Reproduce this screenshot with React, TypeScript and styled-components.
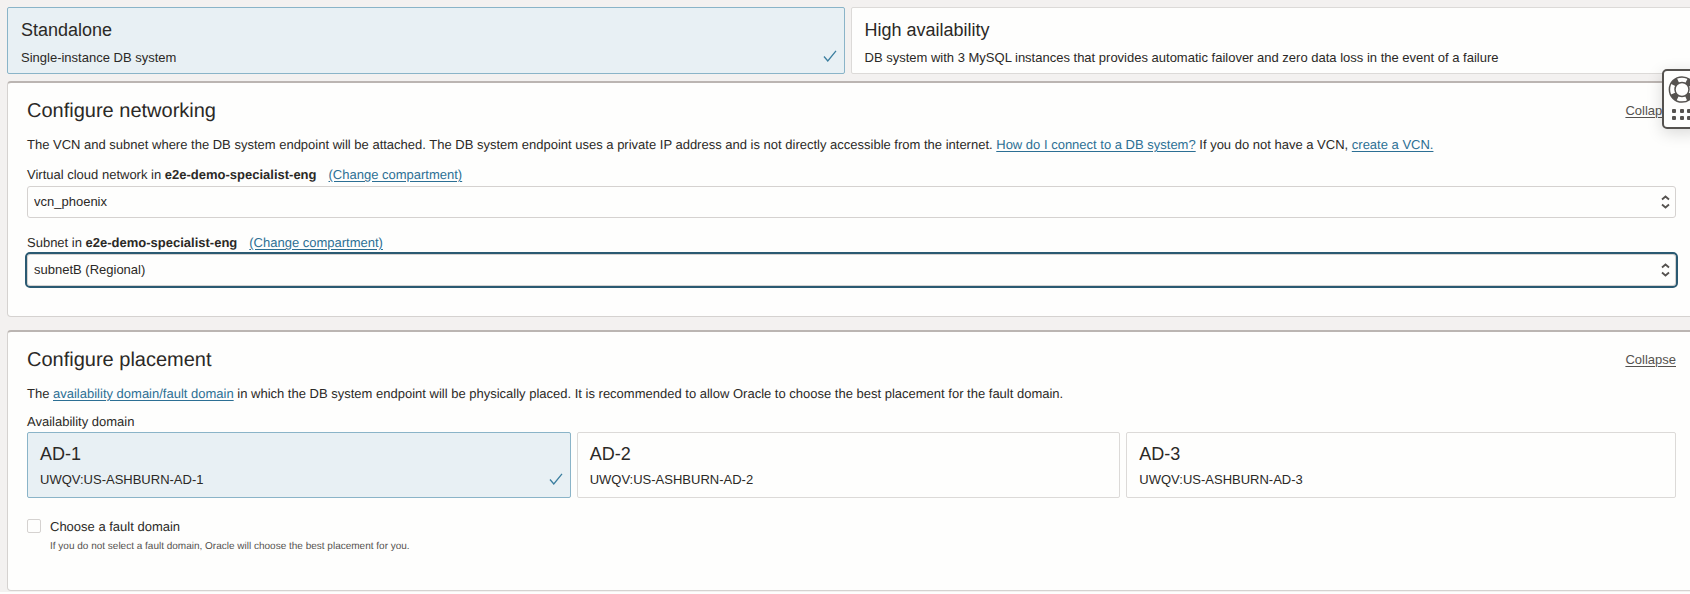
import React, { useState } from "react";
import styled, { createGlobalStyle } from "styled-components";

const Global = createGlobalStyle`
  * { box-sizing: border-box; }
  body {
    margin: 0;
    background: #fefefd;
    color: #2b2926;
    font: 13px/16px "Liberation Sans", Arial, sans-serif;
    text-rendering: geometricPrecision;
  }
  a { color: #2c6f94; text-underline-offset: 2px; }
`;

const Page = styled.main`
  position: relative;
  overflow: hidden;
  padding: 7px 0 1px 7px;
  background: #f3f1f0;
`;

const Choices = styled.div<{ $columns: number; $bleed?: boolean }>`
  display: grid;
  grid-template-columns: repeat(${(p) => p.$columns}, 1fr);
  margin-right: ${(p) => (p.$bleed ? "-4px" : "0")};
`;

const Card = styled.button<{ $selected: boolean; $roomy?: boolean }>`
  display: flex;
  justify-content: space-between;
  align-items: flex-end;
  height: ${(p) => (p.$roomy ? "67px" : "66px")};
  margin-right: 6px;
  padding: ${(p) => (p.$roomy ? "0 7px 7px 13px" : "0 7px 9px 12px")};
  text-align: left;
  font: inherit;
  color: inherit;
  border: 1px solid ${(p) => (p.$selected ? "#8ab4c8" : "#dcdad8")};
  border-radius: 2px;
  background: ${(p) => (p.$selected ? "#e8f0f4" : "#fefefd")};
  &:last-child { margin-right: 0; }
  svg { margin-bottom: ${(p) => (p.$roomy ? "4px" : "3px")}; }
`;

const CardText = styled.span<{ $roomy?: boolean }>`
  display: flex;
  flex-direction: column;
  gap: ${(p) => (p.$roomy ? "9px" : "7px")};
`;

const CardTitle = styled.span`
  font-size: 18px;
  line-height: 22px;
`;

const Panel = styled.section<{ $bottom: number }>`
  margin: 7px -4px 0 0;
  padding: 16px 17px ${(p) => p.$bottom}px 19px;
  background: #fefefd;
  border: 1px solid #d5d2d0;
  border-top: 2px solid #bbb5b2;
  border-radius: 4px;
  & + & { margin-top: 13px; }
`;

const PanelHeader = styled.header`
  display: flex;
  justify-content: space-between;
  align-items: center;
  height: 24px;
`;

const PanelTitle = styled.h2`
  margin: 0;
  font-size: 20px;
  line-height: 24px;
  font-weight: 400;
`;

const Collapse = styled.button`
  padding: 0;
  border: 0;
  background: none;
  font: inherit;
  color: #55524f;
  text-decoration: underline;
  text-underline-offset: 2px;
`;

const Intro = styled.p<{ $tight?: boolean }>`
  margin: 14px 0 ${(p) => (p.$tight ? "12px" : "14px")};
`;

const Field = styled.div`
  margin-bottom: 17px;
`;

const LabelRow = styled.div`
  display: flex;
  gap: 12px;
  margin-bottom: 3px;
`;

const SelectWrap = styled.div`
  display: grid;
  align-items: center;
  & > * { grid-area: 1 / 1; }
  svg { justify-self: end; margin-right: 6px; pointer-events: none; }
`;

const Select = styled.select<{ $focused?: boolean }>`
  appearance: none;
  width: 100%;
  height: 32px;
  padding: 0 6px;
  font: inherit;
  color: inherit;
  border: 1px solid #d5d2d0;
  border-radius: 3px;
  background: #fefefd;
  outline: ${(p) => (p.$focused ? "2px solid #2b5a72" : "none")};
`;

const GroupLabel = styled.div`
  margin-bottom: 2px;
`;

const Fault = styled.div`
  display: grid;
  grid-template-columns: 14px 1fr;
  align-items: start;
  column-gap: 9px;
  row-gap: 4px;
  margin-top: 21px;
`;

const Check = styled.input`
  appearance: none;
  width: 14px;
  height: 14px;
  margin: 0;
  border: 1px solid #d5d2d0;
  border-radius: 2px;
  background: #fefefd;
`;

const Hint = styled.div`
  grid-column: 2;
  font-size: 10px;
  line-height: 16px;
  color: #55524f;
`;

const Support = styled.button`
  position: absolute;
  top: 69px;
  right: -12px;
  width: 40px;
  height: 60px;
  padding: 0;
  border: 2px solid #55524f;
  border-radius: 5px;
  background: #fefefd;
  box-shadow: 0 4px 16px rgba(0, 0, 0, 0.15);
  svg { display: block; }
`;

const Tick = () => (
  <svg width="14" height="12" viewBox="0 0 14 12" fill="none" stroke="#3b7e9f" strokeWidth="1.3" aria-hidden="true">
    <path d="M1 6.5L4.8 11L13 0.8" />
  </svg>
);

const Arrows = () => (
  <svg width="9" height="14" viewBox="0 0 9 14" fill="none" stroke="#55524f" strokeWidth="1.8" aria-hidden="true">
    <path d="M1 4.5L4.5 1.5L8 4.5M1 9.5L4.5 12.5L8 9.5" />
  </svg>
);

const LifeRing = () => (
  <svg width="36" height="56" viewBox="0 0 36 56" fill="none" stroke="#55524f" aria-hidden="true">
    <circle cx="18" cy="18.5" r="12.6" strokeWidth="1.5" />
    <circle cx="18" cy="18.5" r="7" strokeWidth="1.5" />
    <circle cx="18" cy="18.5" r="9.8" strokeWidth="5.6" strokeDasharray="6.6 8.794" strokeDashoffset="-4.4" />
    {[40, 47].map((y) =>
      [10, 18, 25].map((x) => <rect key={`${x}-${y}`} x={x - 2} y={y - 2} width="4" height="4" rx="1" fill="#55524f" stroke="none" />)
    )}
  </svg>
);

type Option = { title: string; detail: string };

const systems: Option[] = [
  { title: "Standalone", detail: "Single-instance DB system" },
  {
    title: "High availability",
    detail: "DB system with 3 MySQL instances that provides automatic failover and zero data loss in the event of a failure",
  },
];

const domains: Option[] = [1, 2, 3].map((n) => ({ title: `AD-${n}`, detail: `UWQV:US-ASHBURN-AD-${n}` }));

function ChoiceGroup({ options, bleed, label }: { options: Option[]; bleed?: boolean; label: string }) {
  const [selected, setSelected] = useState(0);
  return (
    <Choices $columns={options.length} $bleed={bleed} role="group" aria-label={label}>
      {options.map((o, i) => (
        <Card
          key={o.title}
          type="button"
          $selected={i === selected}
          $roomy={bleed}
          aria-pressed={i === selected}
          onClick={() => setSelected(i)}
        >
          <CardText $roomy={bleed}>
            <CardTitle>{o.title}</CardTitle>
            <span>{o.detail}</span>
          </CardText>
          {i === selected && <Tick />}
        </Card>
      ))}
    </Choices>
  );
}

function SelectField({ id, name, value, focused }: { id: string; name: string; value: string; focused?: boolean }) {
  return (
    <Field>
      <LabelRow>
        <label htmlFor={id}>
          {name} in <b>e2e-demo-specialist-eng</b>
        </label>
        <a href="#compartment">(Change compartment)</a>
      </LabelRow>
      <SelectWrap>
        <Select id={id} $focused={focused}>
          <option>{value}</option>
        </Select>
        <Arrows />
      </SelectWrap>
    </Field>
  );
}

export default function App() {
  return (
    <Page>
      <Global />
      <ChoiceGroup options={systems} bleed label="System type" />
      <Panel $bottom={13}>
        <PanelHeader>
          <PanelTitle>Configure networking</PanelTitle>
          <Collapse type="button">Collapse</Collapse>
        </PanelHeader>
        <Intro>
          The VCN and subnet where the DB system endpoint will be attached. The DB system endpoint uses a private IP address and is not
          directly accessible from the internet. <a href="#connect">How do I connect to a DB system?</a> If you do not have a VCN,{" "}
          <a href="#create">create a VCN.</a>
        </Intro>
        <SelectField id="vcn" name="Virtual cloud network" value="vcn_phoenix" />
        <SelectField id="subnet" name="Subnet" value="subnetB (Regional)" focused />
      </Panel>
      <Panel $bottom={35}>
        <PanelHeader>
          <PanelTitle>Configure placement</PanelTitle>
          <Collapse type="button">Collapse</Collapse>
        </PanelHeader>
        <Intro $tight>
          The <a href="#domains">availability domain/fault domain</a> in which the DB system endpoint will be physically placed. It is
          recommended to allow Oracle to choose the best placement for the fault domain.
        </Intro>
        <GroupLabel>Availability domain</GroupLabel>
        <ChoiceGroup options={domains} label="Availability domain" />
        <Fault>
          <Check type="checkbox" id="fault" />
          <label htmlFor="fault">Choose a fault domain</label>
          <Hint>If you do not select a fault domain, Oracle will choose the best placement for you.</Hint>
        </Fault>
      </Panel>
      <Support type="button" aria-label="Support">
        <LifeRing />
      </Support>
    </Page>
  );
}
